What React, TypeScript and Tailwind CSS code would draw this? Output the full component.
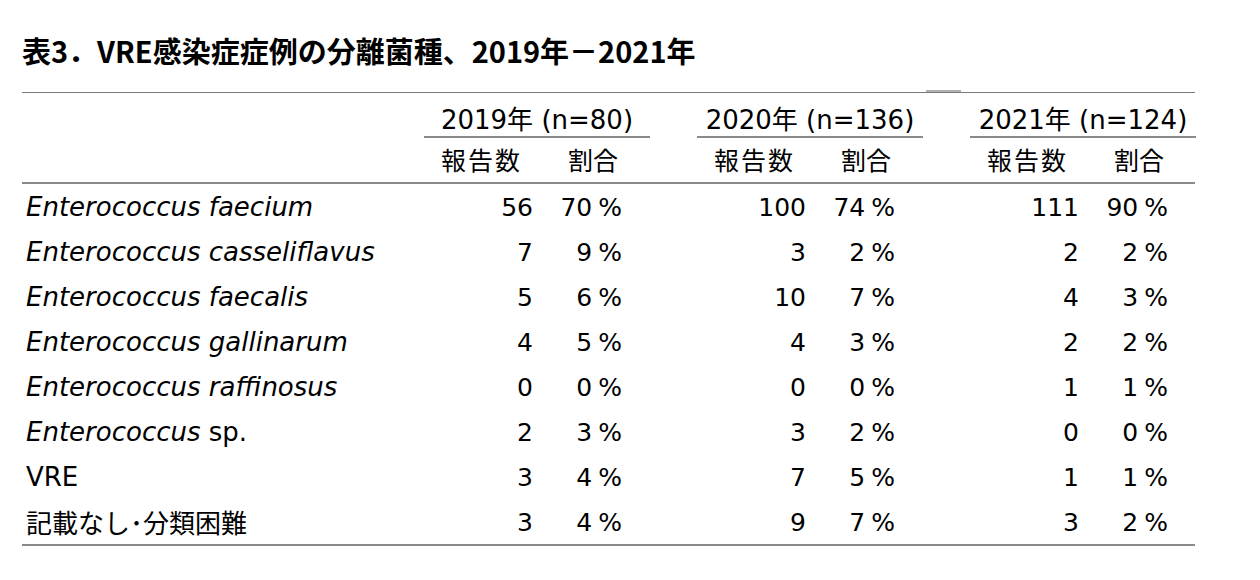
import React from 'react';

const font = { fontFamily: '"DejaVu Sans", "Noto Sans CJK JP", sans-serif' };
const jp = { fontFamily: '"Noto Sans CJK JP", sans-serif' };

const rows: { label: React.ReactNode; data: [number, number][] }[] = [
  { label: <i>Enterococcus faecium</i>, data: [[56, 70], [100, 74], [111, 90]] },
  { label: <i>Enterococcus casseliflavus</i>, data: [[7, 9], [3, 2], [2, 2]] },
  { label: <i>Enterococcus faecalis</i>, data: [[5, 6], [10, 7], [4, 3]] },
  { label: <i>Enterococcus gallinarum</i>, data: [[4, 5], [4, 3], [2, 2]] },
  { label: <i>Enterococcus raffinosus</i>, data: [[0, 0], [0, 0], [1, 1]] },
  { label: <><i>Enterococcus</i> sp.</>, data: [[2, 3], [3, 2], [0, 0]] },
  { label: 'VRE', data: [[3, 4], [7, 5], [1, 1]] },
  { label: <span style={jp}>記載なし･分類困難</span>, data: [[3, 4], [9, 7], [3, 2]] },
];

const years = ['2019年 (n=80)', '2020年 (n=136)', '2021年 (n=124)'];
const groupW = ['w-[273px]', 'w-[273px]', 'w-[239px]'];

const App: React.FC = () => {
  return (
    <div className="w-[1260px] h-[580px] bg-white text-black" style={font}>
      <div className="pl-[22px] pt-[29px]">
        <h1 className="text-[29px] leading-[42px] font-bold" style={jp}>
          表3．VRE感染症症例の分離菌種、2019年－2021年
        </h1>

        <div className="mt-[21px] w-[1173px]">
          <div className="relative h-[1px] bg-[#7a7a7a]">
            <div className="absolute left-[904px] top-[-2px] w-[35px] h-[2px] bg-[#b0b0b0]"></div>
          </div>

          {/* year row */}
          <div className="flex h-[45px]">
            <div className="w-[388px]"></div>
            {years.map((y, i) => (
              <div key={y} className={`${groupW[i]} flex flex-col`}>
                <div className="ml-[14px] w-[226px] flex-1 flex items-end justify-center text-[26px] leading-[32px]">
                  {y}
                </div>
                <div className="ml-[14px] w-[226px] h-[2px] bg-[#8a8a8a]"></div>
              </div>
            ))}
          </div>

          {/* sub header */}
          <div className="flex h-[44px] items-center text-[25px]" style={jp}>
            <div className="w-[388px]"></div>
            {years.map((y, i) => (
              <div key={y} className={`${groupW[i]} flex items-center`}>
                <div className="w-[112px] text-right pl-[26px] tracking-[2px]">報告数</div>
                <div className="w-[96px] text-right">割合</div>
              </div>
            ))}
          </div>
          <div className="h-[2px] bg-[#8a8a8a]"></div>

          {rows.map((r, ri) => (
            <div key={ri} className="flex h-[45px] items-center pt-[2px] text-[25px]">
              <div className="w-[388px] pl-[4px] whitespace-nowrap text-[26px]">{r.label}</div>
              {r.data.map(([n, p], gi) => (
                <div key={gi} className={`${groupW[gi]} flex items-center`}>
                  <div className="w-[123px] text-right">{n}</div>
                  <div className="w-[89px] text-right">
                    {p}
                    <span className="ml-[6px]">%</span>
                  </div>
                </div>
              ))}
            </div>
          ))}
          <div className="h-[2px] bg-[#8a8a8a]"></div>
        </div>
      </div>
    </div>
  );
};

export default App;
